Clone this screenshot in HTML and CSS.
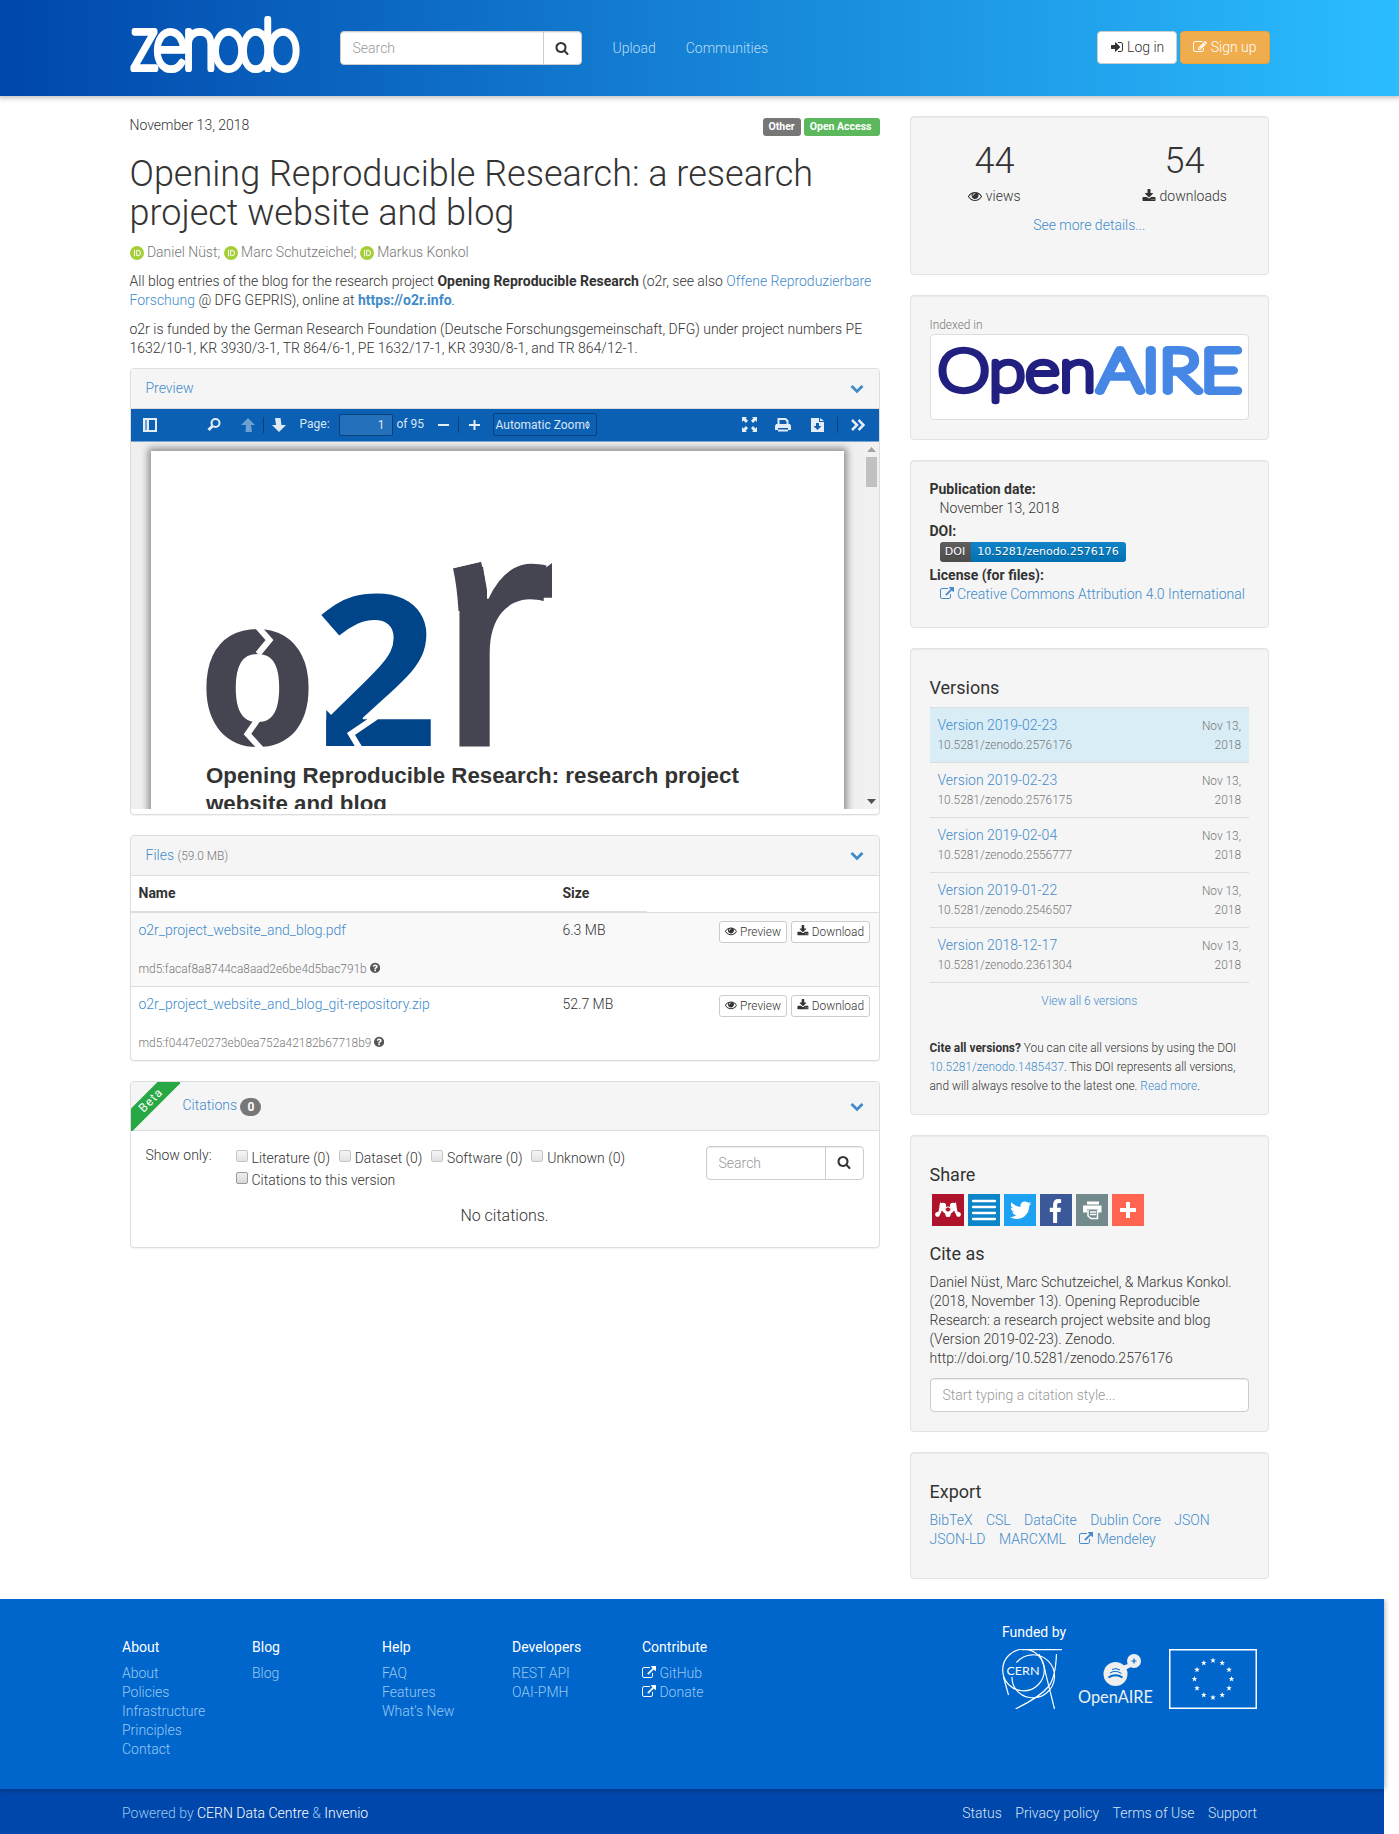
FILE: index.html
```html
<!DOCTYPE html>
<html lang="en">
<head>
<meta charset="utf-8">
<title>Opening Reproducible Research: a research project website and blog | Zenodo</title>
<link rel="stylesheet" href="styles.css">
</head>
<body>
<svg class="defs" width="0" height="0" aria-hidden="true">
  <symbol id="search" viewBox="0 0 1792 1792"><path d="M1216 832q0-185-131.5-316.5t-316.5-131.5-316.5 131.5-131.5 316.5 131.5 316.5 316.5 131.5 316.5-131.5 131.5-316.5zm512 832q0 52-38 90t-90 38q-54 0-90-38l-343-342q-179 124-399 124-143 0-273.5-55.5t-225-150-150-225-55.5-273.5 55.5-273.5 150-225 225-150 273.5-55.5 273.5 55.5 225 150 150 225 55.5 273.5q0 220-124 399l343 343q37 37 37 90z"/></symbol>
  <symbol id="signin" viewBox="0 0 1792 1792"><path d="M1312 896q0 26-19 45l-544 544q-19 19-45 19t-45-19-19-45v-288h-448q-26 0-45-19t-19-45v-384q0-26 19-45t45-19h448v-288q0-26 19-45t45-19 45 19l544 544q19 19 19 45zm352-352v704q0 119-84.500 203.500t-203.500 84.500h-320q-13 0-22.500-9.500t-9.500-22.500q0-4-1-20t-.5-26.500 3-23.500 10-19.500 20.500-6.500h320q66 0 113-47t47-113v-704q0-66-47-113t-113-47h-312l-11.500-1-11.500-3-8-5.500-7-9-2-13.500q0-4-1-20t-.5-26.500 3-23.500 10-19.500 20.500-6.500h320q119 0 203.500 84.500t84.500 203.500z"/></symbol>
  <symbol id="edit" viewBox="0 0 1792 1792"><path d="M888 1184l116-116-152-152-116 116v56h96v96h56zm440-720q-16-16-33 1l-350 350q-17 17-1 33t33-1l350-350q17-17 1-33zm80 594v190q0 119-84.500 203.500t-203.500 84.500h-832q-119 0-203.500-84.500t-84.500-203.500v-832q0-119 84.500-203.500t203.500-84.500h832q63 0 117 25 15 7 18 23 3 17-9 29l-49 49q-14 14-32 8-23-6-45-6h-832q-66 0-113 47t-47 113v832q0 66 47 113t113 47h832q66 0 113-47t47-113v-126q0-13 9-22l64-64q15-15 35-7t20 29zm-96-738l288 288-672 672h-288v-288zm444 132l-92 92-288-288 92-92q28-28 68-28t68 28l152 152q28 28 28 68t-28 68z"/></symbol>
  <symbol id="ext" viewBox="0 0 1792 1792"><path d="M1408 928v320q0 119-84.500 203.500t-203.500 84.500h-832q-119 0-203.500-84.500t-84.500-203.500v-832q0-119 84.500-203.500t203.500-84.500h704q14 0 23 9t9 23v64q0 14-9 23t-23 9h-704q-66 0-113 47t-47 113v832q0 66 47 113t113 47h832q66 0 113-47t47-113v-320q0-14 9-23t23-9h64q14 0 23 9t9 23zm384-864v512q0 26-19 45t-45 19-45-19l-176-176-652 652q-10 10-23 10t-23-10l-114-114q-10-10-10-23t10-23l652-652-176-176q-19-19-19-45t19-45 45-19h512q26 0 45 19t19 45z"/></symbol>
  <symbol id="eye" viewBox="0 0 1792 1792"><path d="M1664 960q-152-236-381-353 61 104 61 225 0 185-131.500 316.500t-316.500 131.500-316.500-131.500-131.500-316.500q0-121 61-225-229 117-381 353 133 205 333.500 326.500t434.500 121.500 434.500-121.500 333.500-326.500zm-720-384q0-20-14-34t-34-14q-125 0-214.500 89.500t-89.500 214.500q0 20 14 34t34 14 34-14 14-34q0-86 61-147t147-61q20 0 34-14t14-34zm848 384q0 34-20 69-140 230-376.500 368.500t-499.500 138.500-499.500-139-376.500-368q-20-35-20-69t20-69q140-229 376.500-368t499.500-139 499.500 139 376.500 368q20 35 20 69z"/></symbol>
  <symbol id="download" viewBox="0 0 1792 1792"><path d="M1344 1344q0-26-19-45t-45-19-45 19-19 45 19 45 45 19 45-19 19-45zm256 0q0-26-19-45t-45-19-45 19-19 45 19 45 45 19 45-19 19-45zm128-224v320q0 40-28 68t-68 28h-1472q-40 0-68-28t-28-68v-320q0-40 28-68t68-28h465l135 136q58 56 136 56t136-56l136-136h464q40 0 68 28t28 68zm-325-569q17 41-14 70l-448 448q-18 19-45 19t-45-19l-448-448q-31-29-14-70 17-39 59-39h256v-448q0-26 19-45t45-19h256q26 0 45 19t19 45v448h256q42 0 59 39z"/></symbol>
  <symbol id="help" viewBox="128 0 1536 1792"><path d="M1024 1376v-192q0-14-9-23t-23-9h-192q-14 0-23 9t-9 23v192q0 14 9 23t23 9h192q14 0 23-9t9-23zm256-672q0-88-55.500-163t-138.500-116-170-41q-243 0-371 213-15 24 8 42l132 100q7 6 19 6 16 0 25-12 53-68 86-92 34-24 86-24 48 0 85.500 26t37.500 59q0 38-20 61t-68 45q-63 28-115.500 86.500t-52.500 125.500v36q0 14 9 23t23 9h192q14 0 23-9t9-23q0-19 21.500-49.500t54.500-49.500q32-18 49-28.500t46-35 44.500-48 28-60.500 12.500-81zm384 192q0 209-103 385.500t-279.500 279.500-385.500 103-385.500-103-279.500-279.500-103-385.500 103-385.500 279.500-279.500 385.500-103 385.500 103 279.500 279.500 103 385.500z"/></symbol>
  <symbol id="chev" viewBox="0 0 1792 1792"><path d="M1683 808l-742 741q-19 19-45 19t-45-19l-742-741q-19-19-19-45.500t19-45.500l166-165q19-19 45-19t45 19l531 531 531-531q19-19 45-19t45 19l166 165q19 19 19 45.500t-19 45.500z"/></symbol>
  <symbol id="orcid" viewBox="0 0 14 14"><circle cx="7" cy="7" r="7" fill="#a6ce39"/><path d="M4.500 3.800v6.400M6.700 4.300v5.400h1.100a2.700 2.700 0 0 0 0-5.400z" fill="none" stroke="#fff" stroke-width="1"/></symbol>
  <symbol id="star" viewBox="-10 -10 20 20"><path d="M0-10 2.400-3.100 9.500-3.100 3.800 1.200 5.900 8.100 0 4-5.900 8.100-3.800 1.200-9.500-3.100-2.400-3.100z"/></symbol>
</svg>

<header class="topbar">
  <div class="container topbar-row">
    <svg class="logo" width="172" height="62" viewBox="0 0 172 62"><text transform="scale(.88 1)" x="-1.700 26 59 92 124 154" y="55.700">zenodo</text></svg>
    <div class="search search-top"><span class="field">Search</span><span class="go"><svg class="i"><use href="#search"/></svg></span></div>
    <nav class="nav"><a>Upload</a><a>Communities</a></nav>
    <div class="auth">
      <a class="btn"><svg class="i"><use href="#signin"/></svg> Log in</a>
      <a class="btn btn-warn"><svg class="i"><use href="#edit"/></svg> Sign up</a>
    </div>
  </div>
</header>

<main class="container columns">
  <div class="main">
    <div class="meta"><span>November 13, 2018</span><span class="labels"><b class="label">Other</b><b class="label green">Open Access</b></span></div>
    <h1>Opening Reproducible Research: a research project website and blog</h1>
    <p class="authors"><svg class="o"><use href="#orcid"/></svg> Daniel Nüst; <svg class="o"><use href="#orcid"/></svg> Marc Schutzeichel; <svg class="o"><use href="#orcid"/></svg> Markus Konkol</p>
    <p>All blog entries of the blog for the research project <b>Opening Reproducible Research</b> (o2r, see also <a>Offene Reproduzierbare Forschung</a> @ DFG GEPRIS), online at <a><b>https://o2r.info</b></a>.</p>
    <p>o2r is funded by the German Research Foundation (Deutsche Forschungsgemeinschaft, DFG) under project numbers PE 1632/10-1, KR 3930/3-1, TR 864/6-1, PE 1632/17-1, KR 3930/8-1, and TR 864/12-1.</p>

    <section class="panel preview">
      <div class="head"><a>Preview</a><svg class="i chev"><use href="#chev"/></svg></div>
      <div class="toolbar">
        <svg class="t-side" width="14" height="14"><path d="M1 1h12v12H1zM5 1v12" fill="none" stroke="#e4edf6" stroke-width="2"/><path d="M2 2h2v10H2z" fill="#6f9fd0"/></svg>
        <svg class="t-find" width="14" height="14"><circle cx="8.500" cy="5" r="4" fill="none" stroke="#e4edf6" stroke-width="2"/><path d="M5.500 8 1.500 12" stroke="#e4edf6" stroke-width="3"/></svg>
        <svg class="t-up" width="14" height="14"><path d="M7 0l7 7h-4l1 7H4.500L5 7H0z" fill="#6d9fd1"/></svg>
        <i class="sep s1"></i>
        <svg class="t-down" width="14" height="14"><path d="M7 14L0 7h4L3 0h5.500L9.500 7H14z" fill="#dfe9f4"/></svg>
        <span class="t-page">Page:</span><span class="t-num">1</span><span class="t-of">of 95</span>
        <svg class="t-minus" width="11" height="14"><path d="M0 7h11" stroke="#e4edf6" stroke-width="2"/></svg>
        <i class="sep s2"></i>
        <svg class="t-plus" width="11" height="14"><path d="M0 7h11M5.500 2v10" stroke="#e4edf6" stroke-width="2"/></svg>
        <span class="t-zoom">Automatic Zoom<svg width="5" height="8"><path d="M2.500 0 4.800 2.500H.2zM2.500 8 4.800 5.500H.2zM0 3.500h5v1H0z" fill="#e4edf6"/></svg></span>
        <svg class="t-full" width="15" height="15"><path d="M0 0h5L3.700 1.300 6 3.700 4 6 1.500 3.500 0 5zM15 0v5l-1.500-1.500L11 6 9 3.700l2.300-2.400L10 0zM0 15v-5l1.500 1.500L4 9l2 2.300-2.300 2.400L5 15zM15 15h-5l1.300-1.300L9 11.300 11 9l2.500 2.500L15 10z" fill="#e4edf6"/></svg>
        <svg class="t-print" width="16" height="14"><path d="M3.500 6V1h7l2 2v3" fill="none" stroke="#e4edf6" stroke-width="2"/><path d="M1 6h14l1 2v4h-3v-2H3v2H0V8z" fill="#e4edf6"/><path d="M3 12.500h10" stroke="#e4edf6" stroke-width="2"/></svg>
        <svg class="t-dl" width="13" height="14"><path d="M0 0h8v4h5v10H0zM9 0l4 3H9z" fill="#e4edf6"/><path d="M5 5h3v3h2.500l-4 4-4-4H5z" fill="#0b60b3"/></svg>
        <i class="sep s3"></i>
        <svg class="t-more" width="14" height="12"><path d="M1 1l5 5-5 5M7.500 1l5 5-5 5" fill="none" stroke="#e4edf6" stroke-width="2.500"/></svg>
      </div>
      <div class="viewer">
        <div class="page">
          <svg class="o2r" width="347" height="186" viewBox="0 0 347 186">
            <g class="o2r-dark">
              <text class="g-o" transform="translate(-8.200 183.500) scale(.928 1)">o</text>
              <text class="g-r" transform="translate(232 185.500) scale(.79 1)">r</text>
              <path d="M247 7.300 275 .7Q279 15 281 29L281 50H252.500Q251 25 247 7.300zM337 8.700 346 2V36.700H309L316 30 320 8z"/>
            </g>
            <text class="g-2" transform="translate(107 184.500) scale(1.040 1)">2</text>
            <path d="M110 140h10.300V190H110z" fill="#fff"/>
            <path d="M120.300 149 126 155 145 172 150 184.500H120.300z" fill="#004489"/>
            <path d="M48.500 62 63.500 79 52 93M56 189 41.500 173 52 158M170 156 145 173 154 188" fill="none" stroke="#fff" stroke-width="6"/>
            <path d="M246-1h29v1.700L247 7.300z" fill="#fff"/>
          </svg>
          <h2>Opening Reproducible Research: research project website and blog</h2>
        </div>
        <div class="scroll"><svg width="9" height="5"><path d="M4.500 0 9 5H0z" fill="#a3a3a3"/></svg><i></i><svg class="dn" width="9" height="5"><path d="M4.500 5 9 0H0z" fill="#505050"/></svg></div>
      </div>
    </section>

    <section class="panel files">
      <div class="head"><span><a>Files</a> <small>(59.0 MB)</small></span><svg class="i chev"><use href="#chev"/></svg></div>
      <div class="row th"><b class="c1">Name</b><b class="c2">Size</b><span class="c3"></span></div>
      <div class="row odd">
        <div class="c1"><a>o2r_project_website_and_blog.pdf</a><small>md5:facaf8a8744ca8aad2e6be4d5bac791b <svg class="i q"><use href="#help"/></svg></small></div>
        <div class="c2">6.3 MB</div>
        <div class="c3"><a class="btn xs"><svg class="i"><use href="#eye"/></svg> Preview</a><a class="btn xs"><svg class="i"><use href="#download"/></svg> Download</a></div>
      </div>
      <div class="row">
        <div class="c1"><a>o2r_project_website_and_blog_git-repository.zip</a><small>md5:f0447e0273eb0ea752a42182b67718b9 <svg class="i q"><use href="#help"/></svg></small></div>
        <div class="c2">52.7 MB</div>
        <div class="c3"><a class="btn xs"><svg class="i"><use href="#eye"/></svg> Preview</a><a class="btn xs"><svg class="i"><use href="#download"/></svg> Download</a></div>
      </div>
    </section>

    <section class="panel cites">
      <div class="ribbon"><span>Beta</span></div>
      <div class="head"><span><a>Citations</a> <b class="badge">0</b></span><svg class="i chev"><use href="#chev"/></svg></div>
      <div class="filters">
        <span class="only">Show only:</span>
        <div class="checks">
          <div><label><i></i>Literature (0)</label><label><i></i>Dataset (0)</label><label><i></i>Software (0)</label><label><i></i>Unknown (0)</label></div>
          <div><label><i class="on"></i>Citations to this version</label></div>
        </div>
        <div class="search search-cite"><span class="field">Search</span><span class="go"><svg class="i"><use href="#search"/></svg></span></div>
      </div>
      <div class="none">No citations.</div>
    </section>
  </div>

  <aside class="side">
    <section class="well stats">
      <div class="nums">
        <div><strong>44</strong><svg class="i"><use href="#eye"/></svg> views</div>
        <div><strong>54</strong><svg class="i"><use href="#download"/></svg> downloads</div>
      </div>
      <a>See more details...</a>
    </section>

    <section class="well indexed">
      <small>Indexed in</small>
      <svg class="oa" width="319" height="86" viewBox="0 0 319 86">
        <text x="4" y="57.500" fill="#211f80" stroke="#211f80" textLength="162" lengthAdjust="spacingAndGlyphs">Open</text>
        <text class="air" x="168" y="57" fill="#4687e6" stroke="#4687e6" textLength="147" lengthAdjust="spacingAndGlyphs">AIRE</text>
      </svg>
    </section>

    <section class="well info">
      <dl>
        <dt>Publication date:</dt><dd>November 13, 2018</dd>
        <dt>DOI:</dt><dd class="doi"><span>DOI</span><span>10.5281/zenodo.2576176</span></dd>
        <dt>License (for files):</dt><dd><a><svg class="i"><use href="#ext"/></svg> Creative Commons Attribution 4.0 International</a></dd>
      </dl>
    </section>

    <section class="well versions">
      <h4>Versions</h4>
      <div class="v cur"><div><a>Version 2019-02-23</a><small>10.5281/zenodo.2576176</small></div><small class="d">Nov 13, 2018</small></div>
      <div class="v"><div><a>Version 2019-02-23</a><small>10.5281/zenodo.2576175</small></div><small class="d">Nov 13, 2018</small></div>
      <div class="v"><div><a>Version 2019-02-04</a><small>10.5281/zenodo.2556777</small></div><small class="d">Nov 13, 2018</small></div>
      <div class="v"><div><a>Version 2019-01-22</a><small>10.5281/zenodo.2546507</small></div><small class="d">Nov 13, 2018</small></div>
      <div class="v"><div><a>Version 2018-12-17</a><small>10.5281/zenodo.2361304</small></div><small class="d">Nov 13, 2018</small></div>
      <a class="all">View all 6 versions</a>
      <p class="citeall"><b>Cite all versions?</b> You can cite all versions by using the DOI <a>10.5281/zenodo.1485437</a>. This DOI represents all versions, and will always resolve to the latest one. <a>Read more</a>.</p>
    </section>

    <section class="well share">
      <h4>Share</h4>
      <div class="icons">
        <svg viewBox="0 0 32 32"><rect width="32" height="32" fill="#af122b"/><g fill="none" stroke="#fff" stroke-width="3"><path d="M5.500 20.500Q8 20 9 12.500 11.500 17 16 20Q20.500 17 23 12.500 24 20 26.500 20.500"/></g><g fill="#fff"><circle cx="11" cy="12" r="3.200"/><circle cx="21" cy="12" r="3.200"/><circle cx="5.500" cy="20.500" r="2.400"/><circle cx="16" cy="20.500" r="2.600"/><circle cx="26.500" cy="20.500" r="2.400"/></g><circle cx="16" cy="15.500" r="2.600" fill="#af122b" stroke="#fff" stroke-width="1"/></svg>
        <svg viewBox="0 0 32 32"><rect width="32" height="32" fill="#0c85c8"/><path d="M5 7h22M5 13h22M5 19h22M5 25h22" stroke="#fff" stroke-width="2.300" stroke-linecap="round"/></svg>
        <svg viewBox="0 0 32 32"><rect width="32" height="32" fill="#1da1f2"/><path transform="translate(4.500 4) scale(.0136)" fill="#fff" d="M1684 408q-67 98-162 167 1 14 1 42 0 130-38 259.500t-115.500 248.500-184.500 210.500-258 146-323 54.500q-271 0-496-145 35 4 78 4 225 0 401-138-105-2-188-64.500t-114-159.500q33 5 61 5 43 0 85-11-112-23-185.500-111.500t-73.500-205.500v-4q68 38 146 41-66-44-105-115t-39-154q0-88 44-163 121 149 294.500 238.500t371.500 99.500q-8-38-8-74 0-134 94.500-228.500t228.500-94.500q140 0 236 102 109-21 205-78-37 115-142 178 93-10 186-50z"/></svg>
        <svg viewBox="0 0 32 32"><rect width="32" height="32" fill="#3b5998"/><path transform="translate(3.500 5) scale(.0131 .0144)" fill="#fff" d="M1343 12v264h-157q-86 0-116 36t-30 108v189h293l-39 296h-254v759h-306v-759h-255v-296h255v-218q0-186 104-288.500t277-102.500q147 0 228 12z"/></svg>
        <svg viewBox="0 0 32 32"><rect width="32" height="32" fill="#738a8d"/><path d="M11 7.500h12v3H11zM7 11.500h18.500v7h-3.500v-3H11v3H7z" fill="#fff"/><path d="M12 16v6l3 2.500h6.500V16M14 18h6M14 20.500h6" fill="none" stroke="#fff" stroke-width="1.500"/></svg>
        <svg viewBox="0 0 32 32"><rect width="32" height="32" fill="#ff6550"/><path d="M8 16h16M16 8v16" stroke="#fff" stroke-width="4"/></svg>
      </div>
      <h4>Cite as</h4>
      <p>Daniel Nüst, Marc Schutzeichel, &amp; Markus Konkol. (2018, November 13). Opening Reproducible Research: a research project website and blog (Version 2019-02-23). Zenodo. http://doi.org/10.5281/zenodo.2576176</p>
      <div class="style-input">Start typing a citation style...</div>
    </section>

    <section class="well export">
      <h4>Export</h4>
      <div class="formats"><a>BibTeX</a><a>CSL</a><a>DataCite</a><a>Dublin Core</a><a>JSON</a><a>JSON-LD</a><a>MARCXML</a><a><svg class="i"><use href="#ext"/></svg> Mendeley</a></div>
    </section>
  </aside>
</main>

<footer class="foot">
  <div class="foot-main"><div class="container foot-row">
    <div class="fc"><h5>About</h5><a>About</a><a>Policies</a><a>Infrastructure</a><a>Principles</a><a>Contact</a></div>
    <div class="fc"><h5>Blog</h5><a>Blog</a></div>
    <div class="fc"><h5>Help</h5><a>FAQ</a><a>Features</a><a>What's New</a></div>
    <div class="fc"><h5>Developers</h5><a>REST API</a><a>OAI-PMH</a></div>
    <div class="fc"><h5>Contribute</h5><a><svg class="i"><use href="#ext"/></svg> GitHub</a><a><svg class="i"><use href="#ext"/></svg> Donate</a></div>
    <div class="funded"><h5>Funded by</h5>
      <div class="funders">
        <svg width="60" height="60" viewBox="0 0 60 60" fill="none" stroke="#fff" stroke-width="1.200"><circle cx="21.500" cy="21" r="20.800"/><path d="M20 .6H60M14.500 13.500A21.500 21.500 0 1 1 13 39M10 28Q10 35 13 39M54.500 5Q53.500 28 47 37 38 48 13.500 60M1.500 28 6.500 46M37 5Q42 14 44 26L52.500 60"/><text x="4.500" y="25.500" textLength="33" lengthAdjust="spacingAndGlyphs">CERN</text></svg>
        <svg width="76" height="60" viewBox="0 0 76 60"><g fill="#efefef"><circle cx="37.500" cy="25" r="12"/><circle cx="56" cy="12" r="7"/><path d="M44 17l6-2 3 3-6 3z"/><text x="0" y="53.500" textLength="75" lengthAdjust="spacingAndGlyphs">OpenAIRE</text></g><path d="M30.500 28.500Q37.500 24 44.500 28.500" fill="none" stroke="#0066cc" stroke-width="2"/><path d="M32 24Q37.500 20.500 43.500 24.500M34 20.500Q38 18.500 42 21" fill="none" stroke="#0066cc" stroke-width="1"/><path d="M53.500 12h5M56 9.500v5" stroke="#0066cc" stroke-width="1.200"/></svg>
        <svg width="88" height="60" viewBox="0 0 88 60"><rect x=".75" y=".75" width="86.500" height="58.500" fill="none" stroke="#fff" stroke-width="1.500"/><g fill="#fff"><use href="#star" x="41" y="8.500" width="6" height="6"/><use href="#star" x="50.200" y="11" width="6" height="6"/><use href="#star" x="57" y="17.800" width="6" height="6"/><use href="#star" x="59.500" y="27" width="6" height="6"/><use href="#star" x="57" y="36.200" width="6" height="6"/><use href="#star" x="50.200" y="43" width="6" height="6"/><use href="#star" x="41" y="45.500" width="6" height="6"/><use href="#star" x="31.800" y="43" width="6" height="6"/><use href="#star" x="25" y="36.200" width="6" height="6"/><use href="#star" x="22.500" y="27" width="6" height="6"/><use href="#star" x="25" y="17.800" width="6" height="6"/><use href="#star" x="31.800" y="11" width="6" height="6"/></g></svg>
      </div>
    </div>
  </div></div>
  <div class="foot-bottom"><div class="container bottom-row">
    <div class="pow">Powered by <a>CERN Data Centre</a> &amp; <a>Invenio</a></div>
    <div class="legal"><a>Status</a><a>Privacy policy</a><a>Terms of Use</a><a>Support</a></div>
  </div></div>
</footer>
</body>
</html>
```
FILE: styles.css
```css
* { box-sizing: border-box; }
body { margin: 0; font: 300 14px/19px Roboto, sans-serif; color: #333; background: #fff; overflow: hidden; height: 1834px; }
.defs { position: absolute; }
a { color: #428bca; text-decoration: none; }
b, strong { font-weight: 700; }
small { font-size: 11.9px; color: #777; }
p { margin: 0 0 10px; }
h1, h2, h4, h5 { margin: 0; }
.i { width: 1em; height: 1em; fill: currentColor; vertical-align: -0.12em; }
.container { width: 1170px; margin: 0 auto; padding: 0 15px; }

/* header */
.topbar { height: 96px; background: linear-gradient(to right, #0047ab, #2bbdff); box-shadow: 0 0 5px 2px rgba(0,0,0,.25); }
.topbar-row { display: flex; align-items: flex-start; }
.logo { margin-top: 13px; flex: none; overflow: visible; }
.logo text { font: 100 69px Inter, sans-serif; fill: #fff; stroke: #fff; stroke-width: 6.2; stroke-linejoin: round; }
.search { display: flex; height: 34px; border: 1px solid #ccc; border-radius: 4px; background: #fff; box-shadow: inset 0 1px 1px rgba(0,0,0,.075); line-height: 32px; }
.field { flex: 1; padding-left: 12px; color: #999; }
.go { border-left: 1px solid #ccc; text-align: center; }
.search-top { width: 242px; margin: 31px 0 0 38px; }
.search-top .go { width: 38px; }
.nav { display: flex; gap: 30px; margin: 39px 0 0 31px; }
.nav a { color: #b9dcf8; }
.auth { display: flex; gap: 3px; margin: 31px 0 0 auto; }
.btn { display: block; height: 33px; padding: 6px 12px; border: 1px solid #ccc; border-radius: 4px; background: #fff; color: #333; white-space: nowrap; }
.btn-warn { background: #f0ad4e; border-color: #eea236; color: #fff; }
.xs { height: 22px; padding: 1px 5px; font-size: 11.9px; line-height: 19px; border-radius: 3px; }

/* columns */
.columns { display: flex; gap: 30px; height: 1503px; padding-top: 20px; }
.main { width: 750px; }
.side { width: 359.5px; }
.meta { display: flex; justify-content: space-between; height: 39px; }
.labels { display: flex; gap: 3px; padding-top: 2px; }
.label { height: 18px; padding: 0 6px; border-radius: 3px; background: #777; color: #fff; font-size: 10.5px; line-height: 17px; }
.green { background: #5cb85c; padding-right: 8px; }
h1 { font-size: 36px; font-weight: 300; line-height: 39px; margin-bottom: 9.5px; }
.authors { color: #777; }
.o { width: 14px; height: 14px; vertical-align: -3px; }

/* panels */
.panel { border: 1px solid #ddd; border-radius: 4px; background: #fff; box-shadow: 0 1px 1px rgba(0,0,0,.05); overflow: hidden; margin-bottom: 20px; }
.head { display: flex; justify-content: space-between; align-items: center; height: 40px; padding: 1px 15px 0; background: #f5f5f5; border-bottom: 1px solid #ddd; }
.chev { color: #428bca; margin-top: -1px; }
.preview { height: 447px; }
.toolbar { display: flex; align-items: center; height: 33px; background: #0b60b3; border-bottom: 1px solid #7aa5d3; color: #d9e6f4; font-size: 12px; font-weight: 400; padding-left: 12px; }
.toolbar > * { flex: none; }
.sep { width: 1px; height: 16px; background: #08407a; }
.t-find { margin-left: 50px; } .t-up { margin-left: 20px; } .s1 { margin-left: 8px; } .t-down { margin-left: 8px; }
.t-page { width: 39px; margin-left: 14px; }
.t-num { width: 54px; height: 22px; border: 1px solid #08407a; border-radius: 2px; background: #2470ba; text-align: right; padding-right: 7px; line-height: 20px; }
.t-of { width: 41px; margin-left: 4px; }
.s2 { margin-left: 9px; } .t-plus { margin-left: 10px; }
.t-zoom { width: 104px; height: 23px; margin-left: 13px; border: 1px solid #08407a; border-radius: 2px; padding-left: 2px; line-height: 22px; white-space: nowrap; }
.t-full { margin-left: 145px; } .t-print { margin-left: 18px; } .t-dl { margin-left: 20.5px; } .s3 { margin-left: 13px; } .t-more { margin-left: 13px; }
.viewer { display: flex; height: 367px; background: #efefef; overflow: hidden; }
.page { width: 693px; height: 500px; margin: 9px 0 0 20px; padding: 110px 55px 0 55.5px; background: #fff; box-shadow: 0 0 7px 3px rgba(0,0,0,.4); flex: none; }
.o2r { display: block; overflow: visible; }
.o2r-dark { fill: #444551; }
.g-o { font: 700 208px "Open Sans", sans-serif; }
.g-r { font: 600 332px "Open Sans", sans-serif; }
.g-2 { font: 700 210px "Open Sans", sans-serif; fill: #004489; }
.page h2 { font: 700 22.3px/28px "Liberation Sans", Arial, sans-serif; margin: 15px -10px 0 0; }
.scroll { width: 15px; margin-left: auto; background: #f1f1f1; display: flex; flex-direction: column; align-items: center; padding: 5px 0; }
.scroll i { width: 11px; height: 30px; margin-top: 5px; background: #c1c1c1; }
.scroll .dn { margin-top: auto; }

.row { display: flex; padding: 8px; height: 74px; border-top: 1px solid #ddd; }
.row.th { height: 36px; border: 0; }
.th { position: relative; }
.th::after { content: ""; position: absolute; left: 0; bottom: 0; width: 516px; height: 1px; background: #ddd; }
.odd { background: #f9f9f9; }
.c1 { width: 424px; }
.c1 small { display: block; margin-top: 20px; }
.c1 .q { color: #555; width: .86em; }
.c2 { width: 120px; }
.c3 { display: flex; gap: 4px; margin-left: auto; margin-right: .5px; }
.files { height: 226px; }

.cites { position: relative; height: 167px; margin: 0; }
.cites .head { height: 49px; padding-left: 52px; }
.badge { display: inline-block; padding: 0 7px; border-radius: 10px; background: #777; color: #fff; font-size: 12px; line-height: 18px; vertical-align: -1px; }
.ribbon { position: absolute; left: 0; top: 0; width: 49px; height: 49px; overflow: hidden; }
.ribbon span { position: absolute; left: -30px; top: 10px; width: 100px; height: 17px; transform: rotate(-45deg); background: #28a745; color: #fff; font-size: 12px; line-height: 17px; letter-spacing: 1px; text-align: center; font-weight: 400; }
.filters { display: flex; padding: 15px 15px 0; height: 67px; }
.only { width: 90px; }
.checks { flex: 1; padding-top: 3px; display: flex; flex-direction: column; gap: 3px; }
.checks div { display: flex; }
.checks label { margin-right: 8.7px; white-space: nowrap; }
.checks i { display: inline-block; width: 12px; height: 12px; margin-right: 4px; border: 1px solid #c6c6c6; border-radius: 2px; background: linear-gradient(#f6f6f6, #e2e2e2); vertical-align: 1px; }
.checks i.on { border-color: #999; background: linear-gradient(#eee, #d9d9d9); }
.search-cite { width: 158px; }
.search-cite .go { width: 38px; }
.none { text-align: center; font-size: 16px; padding-top: 8px; }

/* sidebar */
.well { border: 1px solid #e3e3e3; border-radius: 4px; background: #f5f5f5; box-shadow: inset 0 1px 1px rgba(0,0,0,.05); padding: 19px; margin-bottom: 20px; }
.well h4 { font-size: 18px; font-weight: 400; line-height: 20px; padding-top: 10px; }
.stats { height: 159px; text-align: center; }
.nums { display: grid; grid-template-columns: 190px 190px; margin: 0 -30px 10px; }
.nums strong { display: block; font-size: 36px; font-weight: 300; line-height: 51px; }
.indexed { height: 145px; }
.indexed small { display: block; padding-top: 1px; height: 19px; }
.oa { display: block; border: 1px solid #ddd; border-radius: 4px; background: #fff; }
.oa text { font: 100 60px Lato, sans-serif; stroke-width: 6.5; stroke-linejoin: round; }
.oa .air { stroke-width: 8; }
.info { height: 168px; }
dl, dd { margin: 0; }
dt { font-weight: 700; }
dd { padding-left: 10px; margin-bottom: 4px; }
.doi { display: flex; padding-top: 1px; margin-bottom: 4px; font: 400 11px/20px "DejaVu Sans", sans-serif; color: #fff; text-shadow: 0 1px 0 rgba(1,1,1,.3); }
.doi span:first-child { width: 31px; text-align: center; background: linear-gradient(#5f5f5f, #4c4c4c); border-radius: 3px 0 0 3px; }
.doi span:last-child { width: 155px; text-align: center; background: linear-gradient(#1184c9, #0070b2); border-radius: 0 3px 3px 0; }
.versions { height: 467px; }
.versions h4 { margin-bottom: 9px; }
.v { display: flex; justify-content: space-between; height: 55px; padding: 8px; border-top: 1px solid #ddd; }
.v small, .v a { display: block; }
.v div small { padding-top: 1px; }
.v .d { width: 44px; text-align: right; padding-top: 1px; }
.cur { background: #d9edf7; }
.all { display: block; text-align: center; font-size: 11.9px; border-top: 1px solid #ddd; padding-top: 9px; margin-bottom: 28px; }
.citeall { font-size: 11.9px; }
.share { height: 297px; }
.icons { display: flex; gap: 4px; padding: 9px 2px 8px; }
.icons svg { width: 32px; height: 32px; }
.share p { margin: 9px 0 10px; }
.style-input { height: 34px; border: 1px solid #ccc; border-radius: 4px; background: #fff; color: #999; padding: 0 12px; line-height: 32px; box-shadow: inset 0 1px 1px rgba(0,0,0,.075); }
.export { height: 127px; }
.formats { display: flex; flex-wrap: wrap; column-gap: 13.4px; margin-top: 9px; margin-right: 30px; }

/* footer */
.foot { width: 1384px; color: #99c8f3; }
.foot-main { height: 190px; background: #0066cc; box-shadow: 0 0 6px rgba(0,0,0,.4); position: relative; clip-path: inset(0 -5px -6px 0); }
.foot-row { display: flex; }
.fc { width: 130px; padding-top: 39px; }
.foot h5 { font-size: 14px; font-weight: 400; line-height: 19px; color: #fff; }
.fc h5 { margin-bottom: 7px; }
.fc a { display: block; color: #99c8f3; }
.fc .i { color: #fff; }
.funded { margin-left: 230px; padding-top: 24px; }
.funders { display: flex; gap: 16px; padding-top: 7px; }
.funders svg { flex: none; }
.funders svg:nth-child(3) { margin-left: -1px; }
.funders text { font: 400 11.5px Lato, sans-serif; fill: #fff; stroke: none; }
.funders svg:nth-child(2) text { font-size: 17px; fill: #efefef; }
.foot-bottom { height: 45px; background: #0047ab; padding-top: 15px; }
.bottom-row { display: flex; justify-content: space-between; padding-right: 20px; }
.pow a { color: #fff; }
.legal { display: flex; gap: 13.5px; }
.legal a { color: #d5e3f5; }
```
